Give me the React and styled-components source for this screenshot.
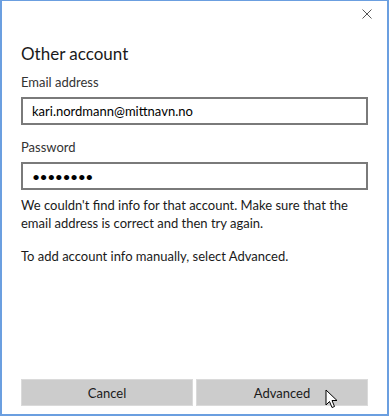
import React from "react";
import styled, { createGlobalStyle } from "styled-components";

const Global = createGlobalStyle`
  html, body {
    margin: 0;
    padding: 0;
    background: #ffffff;
  }
  body {
    font-family: Lato, "Noto Sans", sans-serif;
    color: #000;
  }
`;

export default function App() {
  return (
    <>
      <Global />
      <Window>
        <TitleBar>
          <CloseButton aria-label="Close">
            <svg width="10" height="10" viewBox="0 0 10 10">
              <path d="M0.5 0.5 L9.5 9.5 M9.5 0.5 L0.5 9.5" stroke="#555" strokeWidth="1" />
            </svg>
          </CloseButton>
        </TitleBar>
        <Body>
          <Heading>Other account</Heading>
          <Field>
            <Label>Email address</Label>
            <Input type="text" readOnly value="kari.nordmann@mittnavn.no" />
          </Field>
          <Field>
            <Label>Password</Label>
            <Input type="password" readOnly value="12345678" $password />
          </Field>
          <Message>
            We couldn't find info for that account. Make sure that the email address is correct and then try again.
          </Message>
          <Message>To add account info manually, select Advanced.</Message>
        </Body>
        <Footer>
          <Button>Cancel</Button>
          <Button>
            Advanced
            <Cursor width="13" height="20" viewBox="0 0 13 20">
              <path
                d="M1 1 L1 16 L4.5 12.5 L7 18.5 L9.5 17.5 L7 11.5 L12 11.5 Z"
                fill="#fff"
                stroke="#000"
                strokeWidth="1"
                strokeLinejoin="miter"
              />
            </Cursor>
          </Button>
        </Footer>
      </Window>
    </>
  );
}

const Window = styled.div`
  position: relative;
  box-sizing: border-box;
  width: 389px;
  height: 416px;
  border: 1px solid #6b9fe0;
  border-width: 1px 2px 2px 2px;
  background: #fff;
  display: flex;
  flex-direction: column;
`;

const TitleBar = styled.div`
  height: 30px;
  display: flex;
  justify-content: flex-end;
  align-items: center;
  padding-right: 14px;
`;

const CloseButton = styled.div`
  width: 12px;
  height: 12px;
  display: flex;
  align-items: center;
  justify-content: center;
  margin-top: -5px;
`;

const Body = styled.div`
  flex: 1;
  padding: 0 19px;
  display: flex;
  flex-direction: column;
`;

const Heading = styled.h1`
  margin: 10px 0 0 0;
  font-size: 17px;
  font-weight: 400;
  line-height: 26px;
  color: #1a1a1a;
`;

const Field = styled.div`
  display: flex;
  flex-direction: column;
  margin-top: 5px;
  & + & {
    margin-top: 12px;
  }
`;

const Label = styled.label`
  font-size: 13px;
  line-height: 20px;
  color: #333;
  margin-bottom: 5px;
`;

const Input = styled.input`
  box-sizing: border-box;
  width: 100%;
  height: 28px;
  border: 2px solid #7a7a7a;
  padding: 0 9px;
  font-family: inherit;
  font-size: ${(p) => (p.$password ? "14px" : "13px")};
  color: #000;
  background: #fff;
  outline: none;
  letter-spacing: ${(p) => (p.$password ? "-0.5px" : "0")};
`;

const Message = styled.p`
  margin: 6px 0 0 0;
  font-size: 13px;
  line-height: 18px;
  color: #1a1a1a;
  & + & {
    margin-top: 15px;
  }
`;

const Footer = styled.div`
  display: grid;
  grid-template-columns: 1fr 1fr;
  gap: 3px;
  padding: 0 19px 8px 19px;
`;

const Button = styled.div`
  position: relative;
  height: 27px;
  box-sizing: border-box;
  background: #cccccc;
  border: 1px solid #dadada;
  display: flex;
  align-items: center;
  justify-content: center;
  font-size: 13px;
  color: #1a1a1a;
`;

const Cursor = styled.svg`
  position: absolute;
  left: 128px;
  top: 9px;
`;
